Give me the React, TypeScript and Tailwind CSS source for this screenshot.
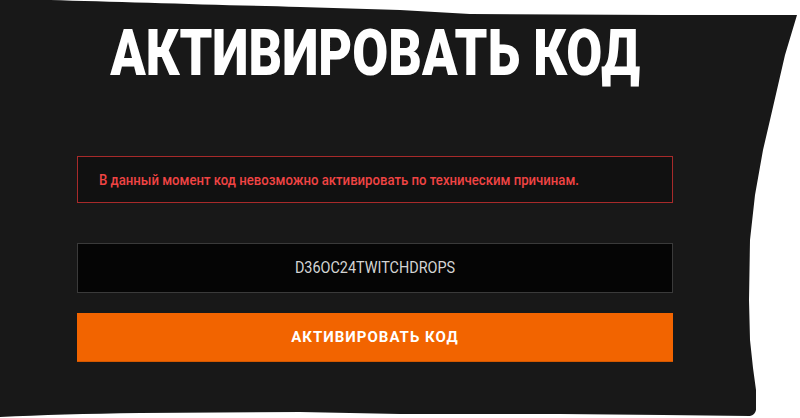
import React from "react";

function TornBackground() {
  return (
    <svg
      className="absolute inset-0 h-full w-full"
      viewBox="0 0 800 418"
      preserveAspectRatio="none"
      aria-hidden="true"
    >
      <path
        d="M0 0 L50 0 C120 2 220 5 300 7 L400 10 L470 14 L666 15 L797 15 L785 55 L770 120 L763 150 L755 195 L750 240 L749 300 L750 340 L753 368 L756 390 L756 410 Q755 415 750 416 L663 415 L560 414 L400 414 L300 412 L140 413 Q60 414 0 417 Z"
        fill="#181818"
      />
    </svg>
  );
}

export default function App() {
  return (
    <div className="relative h-[418px] w-[800px] overflow-hidden bg-white" style={{ fontFamily: "Roboto, 'Noto Sans', sans-serif" }}>
      <TornBackground />
      <div className="relative flex w-[596px] flex-col ml-[77px] pt-[22px]">
        <div className="flex h-[64px] justify-center overflow-visible">
          <span className="inline-block origin-center scale-x-[0.815] whitespace-nowrap text-[64px] font-black leading-none text-white">
            АКТИВИРОВАТЬ КОД
          </span>
        </div>
        <div className="mt-[70px] flex h-[47px] items-center border border-[#a72a2a] bg-[#111111] pl-[21px]">
          <span className="inline-block origin-left scale-x-[0.94] whitespace-nowrap text-[14px] font-medium leading-none text-[#f04444]">
            В данный момент код невозможно активировать по техническим причинам.
          </span>
        </div>
        <div className="mt-[40px] flex h-[50px] items-center justify-center border border-[#3a3a3a] bg-[#050505]">
          <span className="inline-block origin-center scale-x-[0.9] whitespace-nowrap text-[16px] leading-none text-[#d4d4d4]">D36OC24TWITCHDROPS</span>
        </div>
        <button className="mt-[20px] flex h-[49px] items-center justify-center border-b border-[#d45800] bg-[#f26400]">
          <span className="text-[15px] font-bold leading-none tracking-[1px] text-white">АКТИВИРОВАТЬ КОД</span>
        </button>
      </div>
    </div>
  );
}
